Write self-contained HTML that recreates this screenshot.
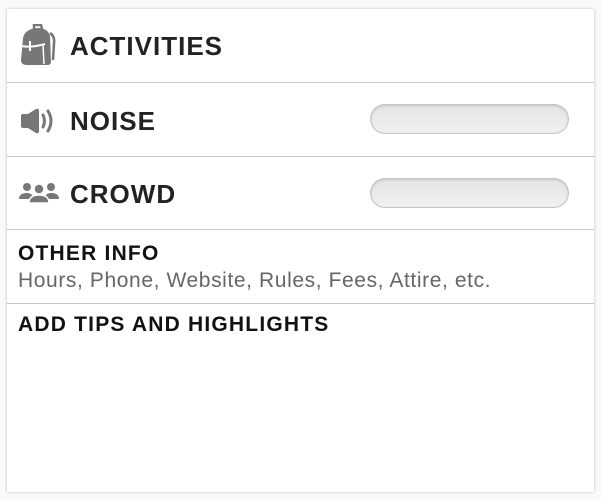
<!DOCTYPE html>
<html><head><style>
body{margin:0;width:601px;height:500px;background:#fafafa;position:relative;overflow:hidden;font-family:"Liberation Sans",sans-serif}
.panel{position:absolute;left:7px;top:9px;width:587px;height:483px;background:#fff;box-shadow:0 0 3px rgba(0,0,0,.25)}
.line{position:absolute;left:0;right:0;height:1px;background:#c8c8c8}
.t{position:absolute;font-weight:bold;color:#222;font-size:26px;letter-spacing:1px;line-height:1}
.h{position:absolute;font-weight:bold;color:#111;font-size:21px;letter-spacing:1.2px;line-height:1}
.sub{position:absolute;color:#666;font-size:21px;letter-spacing:0.6px;line-height:1;left:11px;top:261px}
.sl{position:absolute;left:363px;width:197px;height:28px;border-radius:15px;background:linear-gradient(#e4e4e4,#f0f0f0);border:1px solid #c4c4c4;box-shadow:inset 0 1px 2px rgba(0,0,0,.15)}
svg{position:absolute}
</style></head><body>
<div class="panel">
<svg style="left:12px;top:15px" width="38" height="42" viewBox="0 0 38 42">
<path d="M15 5 L15 1 L22 1 L23 5" fill="none" stroke="#777" stroke-width="2.5"/>
<path d="M4 14 Q6 5 18 4 Q29 4 31 12 L32 38 Q32 41 28 41 L8 41 Q2 41 2 36 Z" fill="#777"/>
<path d="M31 9 Q36 12 35 20 L34 36" fill="none" stroke="#777" stroke-width="2.5"/>
<path d="M2 22 Q12 24 26 20" fill="none" stroke="#fff" stroke-width="2"/>
<path d="M11 17 L11 27" fill="none" stroke="#fff" stroke-width="2"/>
<path d="M24 21 L25 40" fill="none" stroke="#fff" stroke-width="1.5"/>
</svg>
<div class="t" style="left:63px;top:24px">ACTIVITIES</div>
<div class="line" style="top:73px"></div>
<svg style="left:12px;top:99px" width="38" height="26" viewBox="0 0 38 26">
<path d="M2 8 Q2 6 4 6 L9 6 L17 1 Q20 0 20 3 L20 23 Q20 26 17 25 L9 20 L4 20 Q2 20 2 18 Z" fill="#777"/>
<path d="M24 7 Q27 13 24 19" fill="none" stroke="#777" stroke-width="3" stroke-linecap="round"/>
<path d="M29 3 Q35 13 29 23" fill="none" stroke="#777" stroke-width="3" stroke-linecap="round"/>
</svg>
<div class="t" style="left:63px;top:99px">NOISE</div>
<div class="sl" style="top:95px"></div>
<div class="line" style="top:147px"></div>
<svg style="left:12px;top:173px" width="40" height="22" viewBox="0 0 40 22">
<circle cx="8" cy="5" r="4" fill="#777"/><circle cx="32" cy="5" r="4" fill="#777"/>
<path d="M0 17 Q0 11 8 11 Q14 11 14 17 Z" fill="#777"/><path d="M26 17 Q26 11 32 11 Q40 11 40 17 Z" fill="#777"/>
<circle cx="20" cy="7" r="5" fill="#777" stroke="#fff" stroke-width="1.5"/>
<path d="M10 21 Q10 13 20 13 Q30 13 30 21 Z" fill="#777" stroke="#fff" stroke-width="1.5"/>
</svg>
<div class="t" style="left:63px;top:172px">CROWD</div>
<div class="sl" style="top:169px"></div>
<div class="line" style="top:220px"></div>
<div class="h" style="left:11px;top:234px">OTHER INFO</div>
<div class="sub">Hours, Phone, Website, Rules, Fees, Attire, etc.</div>
<div class="line" style="top:294px"></div>
<div class="h" style="left:11px;top:305px">ADD TIPS AND HIGHLIGHTS</div>
</div>
</body></html>
